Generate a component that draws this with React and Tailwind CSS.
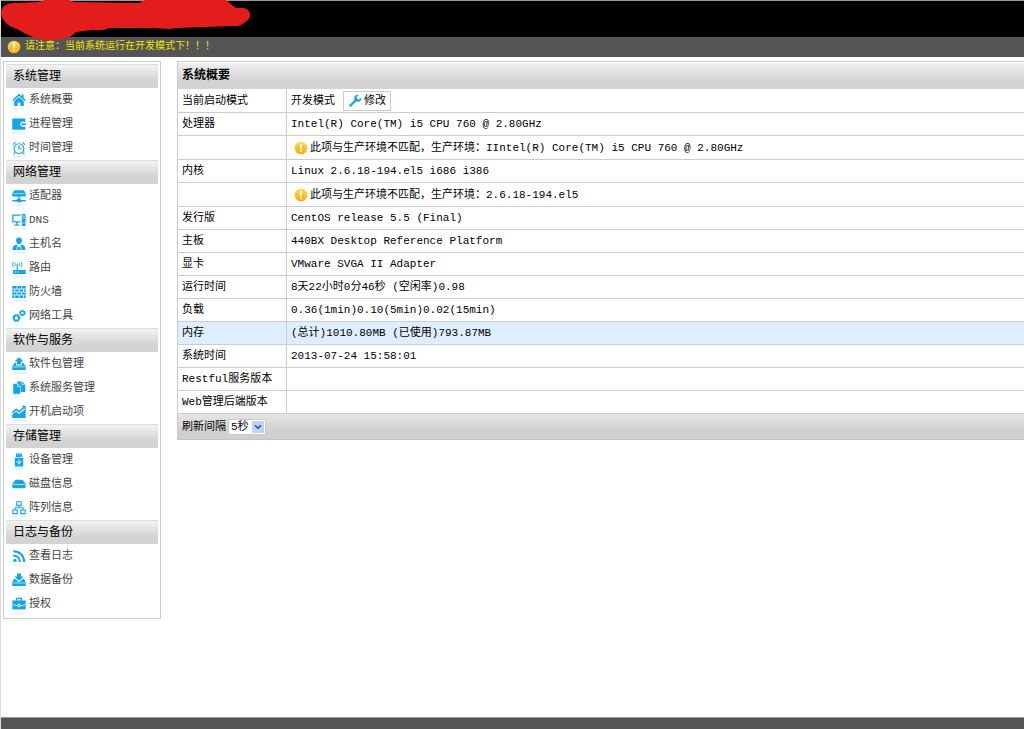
import React from "react";
import { ChevronDown } from "lucide-react";

const line = { fill: "none", stroke: "currentColor", strokeWidth: 1.3 };

const drawings = {
  home: (
    <>
      <path d="M7 0.8 L0.3 7 L1.3 8 L7 2.9 L12.7 8 L13.7 7 L11.6 5 V1.6 H10 V3.6 Z" />
      <path d="M7 4 L2.2 8.2 V13 H5.6 V9.4 H8.4 V13 H11.8 V8.2 Z" />
    </>
  ),
  process: (
    <>
      <path d="M0.3 1.5 H13.3 V5 L10 4.6 L7.8 7.3 L10 10 L13.3 9.6 V12.8 H0.3 Z" />
      <path d="M9 7.3 L10.7 5.4 V6.6 H14 V8 H10.7 V9.2 Z" />
    </>
  ),
  clock: (
    <>
      <circle cx="7" cy="7.6" r="4.9" {...line} strokeWidth="1.1" />
      <path d="M7 4.6 V7.8 H9.4 M1 3.6 L3.6 1.2 M13 3.6 L10.4 1.2 M3 11.6 L1.6 13.4 M11 11.6 L12.4 13.4" {...line} strokeWidth="1.1" />
    </>
  ),
  adapter: (
    <>
      <path d="M2.4 1.2 H11.6 L13.7 4 V7.4 H0.3 V4 Z" />
      <path d="M1.2 4.6 H12.8" stroke="#fff" strokeWidth="0.6" />
      <path d="M6.3 7 H7.7 V10 H9 V11 H13.7 V12.4 H9 V13.2 H5 V12.4 H0.3 V11 H5 V10 H6.3 Z" />
    </>
  ),
  dns: (
    <>
      <path d="M8.6 2.2 H0.9 V8.8 H8.6 M4.8 9 V11.5 M2.4 12.2 H7.4" {...line} />
      <path d="M9.8 1 H13.6 V13 H9.8 Z" />
      <path d="M10.4 3 H13 M10.4 5 H13 M10.4 10 H13" stroke="#fff" strokeWidth="0.7" />
    </>
  ),
  user: (
    <>
      <path d="M7 0.6 C9.3 0.6 10.2 2.2 9.9 4 C9.6 6 8.4 7.3 7 7.3 C5.6 7.3 4.4 6 4.1 4 C3.8 2.2 4.7 0.6 7 0.6 Z" />
      <path d="M0.6 13 C0.6 9.4 2 8.3 4.7 7.6 L7 10.4 L9.3 7.6 C12 8.3 13.4 9.4 13.4 13 Z" />
      <path d="M5.4 9 L4.8 13 M8.6 9 L9.2 13" stroke="#fff" strokeWidth="0.7" />
    </>
  ),
  route: (
    <>
      <path d="M1.6 0.8 C0.2 2.4 0.2 4.6 1.6 6.2 M3.5 1.8 C2.7 2.8 2.7 4.2 3.5 5.2 M8.8 0.8 C10.2 2.4 10.2 4.6 8.8 6.2 M6.9 1.8 C7.7 2.8 7.7 4.2 6.9 5.2" {...line} strokeWidth="1" />
      <path d="M4.6 2.4 H5.8 V9 H13.7 V13 H1.2 V9 H4.6 Z" />
      <path d="M3 11 H4.2 M5.4 11 H6.6" stroke="#fff" strokeWidth="0.9" />
    </>
  ),
  wall: (
    <>
      <path d="M0.3 1 H13.7 V13 H0.3 Z" />
      <path d="M0.3 4 H13.7 M0.3 7 H13.7 M0.3 10 H13.7 M5 1 V4 M9.6 1 V4 M2.7 4 V7 M7.3 4 V7 M11.5 4 V7 M5 7 V10 M9.6 7 V10 M2.7 10 V13 M7.3 10 V13 M11.5 10 V13" stroke="#fff" strokeWidth="0.8" />
    </>
  ),
  gears: (
    <>
      <circle cx="4.4" cy="9" r="2.6" {...line} strokeWidth="1.9" />
      <circle cx="4.4" cy="9" r="3.7" {...line} strokeWidth="0.9" strokeDasharray="1.5 1.4" />
      <circle cx="10.4" cy="4" r="2" {...line} strokeWidth="1.6" />
      <circle cx="10.4" cy="4" r="3" {...line} strokeWidth="0.8" strokeDasharray="1.3 1.05" />
    </>
  ),
  upload: (
    <>
      <path d="M7 0.2 L11.6 4.6 H9 V7.6 H5 V4.6 H2.4 Z" />
      <path d="M2.6 6 H4.2 V8.5 H9.8 V6 H11.4 L13.7 9.4 V13 H0.3 V9.4 Z" />
      <path d="M1 9.9 H13" stroke="#fff" strokeWidth="0.6" />
    </>
  ),
  copy: (
    <>
      <path d="M5 0.6 H10.2 L13.3 3.4 V11 H5 Z" />
      <path d="M0.9 2.6 H5.8 L8.6 5.4 V13.2 H0.9 Z" stroke="#fff" strokeWidth="0.6" />
      <path d="M5.6 2.8 V5.6 H8.4 M10 1 V3.6 H12.8" fill="none" stroke="#fff" strokeWidth="0.7" />
    </>
  ),
  chart: (
    <>
      <path d="M0.3 13 V9.6 L4.2 6.6 L7.4 9 L13.7 3.8 V13 Z" />
      <path d="M0.4 7.6 L4.2 4.4 L7.3 6.7 L11.6 2.6" {...line} strokeWidth="1.5" />
      <path d="M9.4 0.8 H13.7 V5 Z" />
    </>
  ),
  usb: (
    <>
      <path d="M4 0.4 H10 V4 H4 Z M2.8 4.8 H11.2 V13.4 H2.8 Z" />
      <path d="M5.4 1.8 H6.4 M7.6 1.8 H8.6 M7 6.4 V11.6 M5.2 8 V9.4 L7 10.4 L8.8 9.2 V7.8" fill="none" stroke="#fff" strokeWidth="0.8" />
    </>
  ),
  disk: (
    <>
      <path d="M3 3.2 C4 2.6 10 2.6 11 3.2 L13.7 6.8 V9.6 C13.7 10.8 13 11.2 12 11.2 H2 C1 11.2 0.3 10.8 0.3 9.6 V6.8 Z" />
      <path d="M0.8 7 C3 7.8 11 7.8 13.2 7" fill="none" stroke="#fff" strokeWidth="0.7" />
    </>
  ),
  array: (
    <path d="M4.8 0.8 H9.2 V4.4 H4.8 Z M0.8 9 H5.2 V12.6 H0.8 Z M8.8 9 H13.2 V12.6 H8.8 Z M7 4.4 V6.7 M3 9 V6.7 H11 V9" {...line} strokeWidth="1.1" />
  ),
  rss: (
    <>
      <circle cx="3" cy="11.4" r="1.7" />
      <path d="M1.2 6.6 C5.2 6.6 7.8 9.2 7.8 13.1 M1.2 2.2 C7.8 2.2 12.2 6.6 12.2 13.1" {...line} strokeWidth="2" />
    </>
  ),
  download: (
    <>
      <path d="M5 0.4 H9 V3.6 H11.6 L7 8 L2.4 3.6 H5 Z" />
      <path d="M1.8 6 H3.4 L7 9.4 L10.6 6 H12.2 L13.7 9.4 V13 H0.3 V9.4 Z" />
      <path d="M1 10 H13" stroke="#fff" strokeWidth="0.6" />
    </>
  ),
  briefcase: (
    <>
      <path d="M4.6 3.4 V1.4 H9.4 V3.4" {...line} />
      <path d="M0.3 3.4 H13.7 V12.4 H0.3 Z" />
      <path d="M0.3 7.4 C3 8.6 5 8.6 5.6 8.6 M13.7 7.4 C11 8.6 9 8.6 8.4 8.6 M5.8 7.4 H8.2 V9.6 H5.8 Z" fill="none" stroke="#fff" strokeWidth="0.8" />
    </>
  ),
};

const sections = [
  ["系统管理", [["home", "系统概要"], ["process", "进程管理"], ["clock", "时间管理"]]],
  ["网络管理", [["adapter", "适配器"], ["dns", "DNS"], ["user", "主机名"], ["route", "路由"], ["wall", "防火墙"], ["gears", "网络工具"]]],
  ["软件与服务", [["upload", "软件包管理"], ["copy", "系统服务管理"], ["chart", "开机启动项"]]],
  ["存储管理", [["usb", "设备管理"], ["disk", "磁盘信息"], ["array", "阵列信息"]]],
  ["日志与备份", [["rss", "查看日志"], ["download", "数据备份"], ["briefcase", "授权"]]],
];

const rows = [
  { label: "处理器", value: "Intel(R) Core(TM) i5 CPU 760 @ 2.80GHz" },
  { warning: "此项与生产环境不匹配，生产环境：IIntel(R) Core(TM) i5 CPU 760 @ 2.80GHz" },
  { label: "内核", value: "Linux 2.6.18-194.el5 i686 i386" },
  { warning: "此项与生产环境不匹配，生产环境：2.6.18-194.el5" },
  { label: "发行版", value: "CentOS release 5.5 (Final)" },
  { label: "主板", value: "440BX Desktop Reference Platform" },
  { label: "显卡", value: "VMware SVGA II Adapter" },
  { label: "运行时间", value: "8天22小时0分46秒 (空闲率)0.98" },
  { label: "负载", value: "0.36(1min)0.10(5min)0.02(15min)" },
  { label: "内存", value: "(总计)1010.80MB (已使用)793.87MB", active: true },
  { label: "系统时间", value: "2013-07-24 15:58:01" },
  { label: "Restful服务版本", value: "" },
  { label: "Web管理后端版本", value: "" },
];

function MenuIcon({ name }) {
  return (
    <svg
      viewBox="0 0 14 14"
      fill="currentColor"
      aria-hidden="true"
      className="size-3.5 shrink-0 text-[#12a5ea] [-webkit-box-reflect:below_0px_linear-gradient(transparent_70%,rgba(0,0,0,0.25))]"
    >
      {drawings[name]}
    </svg>
  );
}

function WarningIcon() {
  return (
    <svg viewBox="0 0 14 14" aria-hidden="true" className="size-3.5 shrink-0">
      <defs>
        <linearGradient id="amber" x1="0" y1="0" x2="0" y2="1">
          <stop offset="0" stopColor="#ffdc50" />
          <stop offset="1" stopColor="#f9a70c" />
        </linearGradient>
      </defs>
      <circle cx="7" cy="7" r="6.3" fill="url(#amber)" />
      <path d="M6 2.8 H8 L7.7 8.2 H6.3 Z" fill="#fff" />
      <circle cx="7" cy="10.2" r="1" fill="#fff" />
    </svg>
  );
}

function Wrench() {
  return (
    <svg viewBox="0 0 14 14" aria-hidden="true" className="size-3.5 shrink-0 text-[#12a5ea]" fill="currentColor">
      <path d="M10.6 0.9 L8.6 3 L9 5 L11 5.4 L13.1 3.4 C13.8 5.8 12 8.2 9.2 7.8 L8 7.5 L3.2 12.5 C2.2 13.5 0.5 11.9 1.5 10.8 L6.5 6 L6.2 4.8 C5.8 2 8.2 0.2 10.6 0.9 Z" />
    </svg>
  );
}

export default function App() {
  return (
    <div className="flex min-h-screen flex-col border-l border-[#dcdcdc] bg-white font-['Liberation_Mono','Noto_Sans_CJK_SC',monospace] text-[11px] leading-4 text-black">
      <header>
        <div className="relative h-[37px] border-t border-[#999] bg-black">
          <svg viewBox="0 0 250 41" aria-hidden="true" className="absolute -top-px left-0 h-[41px] w-[250px]">
            <path
              d="M0 13 C0 6 6 3 14 3 L38 2 L44 0 H68 L72 2 L138 3 L144 0 H225 L235 8 L243 8 C251 10 251 19 244 22 C240 26 237 27 231 26 L176 28 C168 30 160 28 152 28 L108 28 C104 31 96 30 90 30 L75 32 C71 37 64 40 51 40 C38 41 28 36 16 29 C8 27 0 20 0 13 Z"
              fill="#e31d1c"
            />
          </svg>
        </div>
        <div className="flex h-5 items-center gap-1 bg-[#555] pl-1.5 text-[10px] text-[#f2e600]">
          <WarningIcon />
          <p>请注意：当前系统运行在开发模式下！！！</p>
        </div>
      </header>

      <div className="flex flex-1 items-start gap-4 pt-1 pl-0.5">
        <nav className="w-[158px] shrink-0 border border-[#ccc] px-0.5 pt-0.5 pb-0.5">
          {sections.map(([title, items]) => (
            <section key={title}>
              <h2 className="flex h-6 items-center border-t border-[#ddd] bg-linear-to-b from-[#f2f2f2] to-[#d3d3d3] to-70% pl-[7px] text-[12px]">
                {title}
              </h2>
              <ul>
                {items.map(([icon, text]) => (
                  <li key={text}>
                    <a href="#" className="flex h-6 items-center gap-[3px] pl-1.5 text-[#444]">
                      <MenuIcon name={icon} />
                      {text}
                    </a>
                  </li>
                ))}
              </ul>
            </section>
          ))}
        </nav>

        <main className="min-w-0 flex-1">
          <table className="w-full border-separate border-spacing-0 border-t border-l border-[#ccc] text-left">
            <thead>
              <tr>
                <th colSpan={2} className="h-[27px] border-t border-white bg-linear-to-b from-[#f0f0f0] to-[#d3d3d3] to-70% px-1 text-[12px] font-bold">
                  系统概要
                </th>
              </tr>
            </thead>
            <tbody>
              <tr>
                <th scope="row" className="h-6 w-[109px] border-r border-b border-[#ccc] px-1 font-normal">当前启动模式</th>
                <td className="h-6 border-b border-[#ccc] px-1">
                  <div className="flex items-center gap-2">
                    <span>开发模式</span>
                    <button type="button" className="flex h-5 items-center gap-0.5 border border-[#ccc] bg-white px-1">
                      <Wrench />
                      修改
                    </button>
                  </div>
                </td>
              </tr>
              {rows.map((row, i) => (
                <tr key={i} className={row.active ? "bg-[#dfeefe]" : "bg-white"}>
                  <th scope="row" className="border-r border-b border-[#ccc] px-1 font-normal whitespace-nowrap">{row.label}</th>
                  {row.warning ? (
                    <td className="h-6 border-b border-[#ccc] px-1">
                      <div className="flex items-center gap-0.5 pl-[3px] whitespace-nowrap">
                        <WarningIcon />
                        {row.warning}
                      </div>
                    </td>
                  ) : (
                    <td className="h-[23px] border-b border-[#ccc] px-1">{row.value}</td>
                  )}
                </tr>
              ))}
            </tbody>
            <tfoot>
              <tr>
                <td colSpan={2} className="h-[26px] border-b border-[#c4c4c4] bg-linear-to-b from-[#e6e6e6] to-[#d0d0d0] to-70% px-1">
                  <div className="flex items-center gap-0.5">
                    <label htmlFor="interval">刷新间隔</label>
                    <span className="relative flex">
                      <select id="interval" defaultValue="5" className="h-4 w-[38px] appearance-none border border-[#ccc] bg-white pl-0.5 text-[11px] leading-[14px]">
                        <option value="5">5秒</option>
                        <option value="10">10秒</option>
                      </select>
                      <span className="pointer-events-none absolute top-0.5 right-0.5 flex h-3 w-3 items-center justify-center rounded-[1px] bg-[#bfd2fb] text-[#3c5687]">
                        <ChevronDown size={10} strokeWidth={4} />
                      </span>
                    </span>
                  </div>
                </td>
              </tr>
            </tfoot>
          </table>
        </main>
      </div>

      <footer className="h-3 border-t border-[#999] bg-[#555]" />
    </div>
  );
}
